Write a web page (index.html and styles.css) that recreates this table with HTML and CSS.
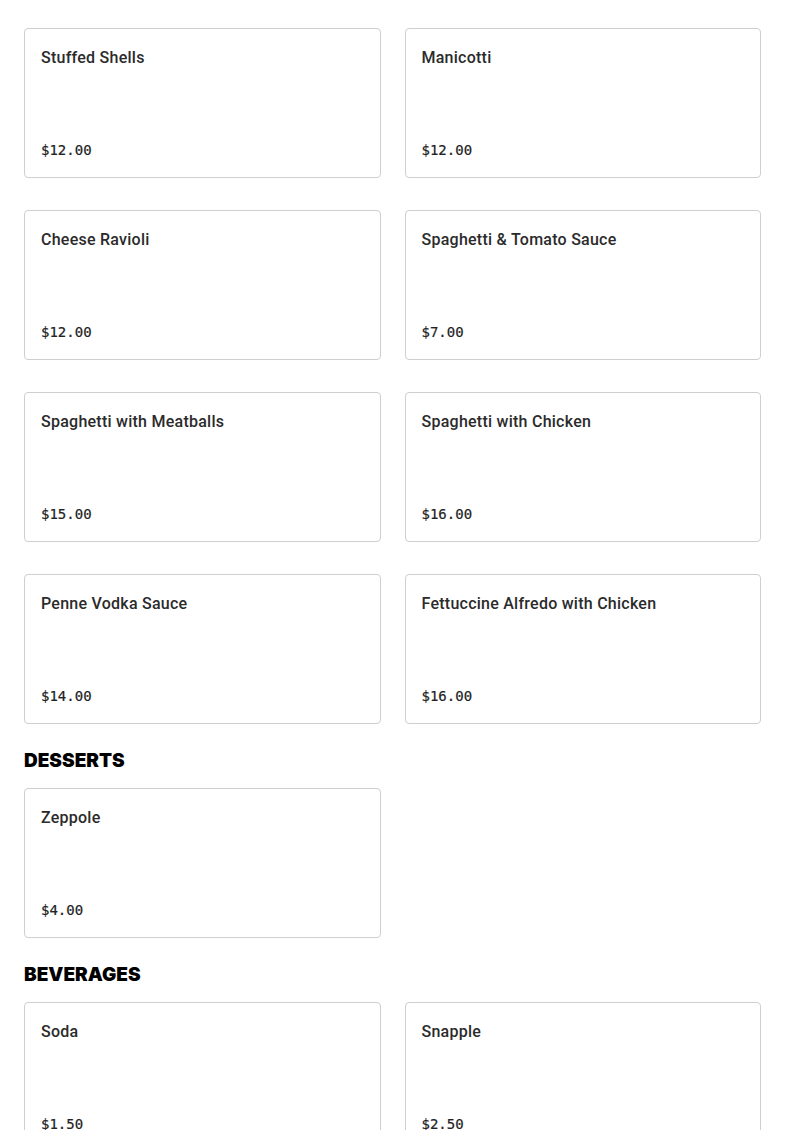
FILE: index.html
```html
<!DOCTYPE html>
<html>
<head>
<meta charset="utf-8">
<link rel="stylesheet" href="styles.css">
</head>
<body>
<main class="menu">
  <section class="section">
    <div class="grid">
      <div class="card"><div class="name">Stuffed Shells</div><div class="price">$12.00</div></div>
      <div class="card"><div class="name">Manicotti</div><div class="price">$12.00</div></div>
      <div class="card"><div class="name">Cheese Ravioli</div><div class="price">$12.00</div></div>
      <div class="card"><div class="name">Spaghetti &amp; Tomato Sauce</div><div class="price">$7.00</div></div>
      <div class="card"><div class="name">Spaghetti with Meatballs</div><div class="price">$15.00</div></div>
      <div class="card"><div class="name">Spaghetti with Chicken</div><div class="price">$16.00</div></div>
      <div class="card"><div class="name">Penne Vodka Sauce</div><div class="price">$14.00</div></div>
      <div class="card"><div class="name">Fettuccine Alfredo with Chicken</div><div class="price">$16.00</div></div>
    </div>
  </section>
  <section class="section">
    <h2 class="heading">DESSERTS</h2>
    <div class="grid">
      <div class="card"><div class="name">Zeppole</div><div class="price">$4.00</div></div>
    </div>
  </section>
  <section class="section">
    <h2 class="heading">BEVERAGES</h2>
    <div class="grid">
      <div class="card"><div class="name">Soda</div><div class="price">$1.50</div></div>
      <div class="card"><div class="name">Snapple</div><div class="price">$2.50</div></div>
    </div>
  </section>
</main>
</body>
</html>
```

FILE: styles.css
```css
html, body {
  margin: 0;
  padding: 0;
  background: #fff;
}
.menu {
  padding: 28px 24px 0;
  font-family: "Roboto", "Liberation Sans", sans-serif;
}
.grid {
  display: grid;
  grid-template-columns: 1fr 1fr;
  column-gap: 24px;
  row-gap: 32px;
}
.card {
  box-sizing: border-box;
  height: 150px;
  border: 1px solid #cfcfcf;
  border-radius: 4px;
  padding: 19px 16px 19px;
  display: flex;
  flex-direction: column;
  justify-content: space-between;
}
.name {
  font-size: 16px;
  line-height: 20px;
  font-weight: 500;
  color: #2b2b2b;
  letter-spacing: 0.25px;
}
.price {
  font-family: "DejaVu Sans Mono", "Liberation Mono", monospace;
  font-size: 14px;
  line-height: 16px;
  font-weight: 400;
  color: #222;
  -webkit-text-stroke: 0.2px #222;
}
.heading {
  margin: 25px 0 15px;
  font-family: "Inter", "Liberation Sans", sans-serif;
  font-size: 19px;
  line-height: 24px;
  font-weight: 900;
  color: #000;
  letter-spacing: 0;
}
```
